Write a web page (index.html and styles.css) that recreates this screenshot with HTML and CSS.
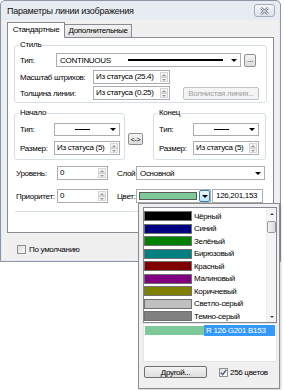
FILE: index.html
```html
<!DOCTYPE html>
<html lang="ru">
<head>
  <meta charset="UTF-8">
  <title>Параметры линии изображения</title>
  <link rel="stylesheet" href="styles.css">
</head>
<body>
  <div class="window">
    <div class="titlebar">
      <span class="title">Параметры линии изображения</span>
      <span class="close-btn">
        <svg width="9" height="8" viewBox="0 0 9 8">
          <path d="M1 1 L8 7 M8 1 L1 7" stroke="#7d8793" stroke-width="2.6"/>
          <path d="M1 1 L8 7 M8 1 L1 7" stroke="#f6f8fa" stroke-width="0.9"/>
        </svg>
      </span>
    </div>

    <div class="client">
      <div class="tabs">
        <div class="tab tab-active">Стандартные</div>
        <div class="tab tab-extra">Дополнительные</div>
      </div>

      <div class="tab-page">
        <!-- Стиль -->
        <fieldset class="group group-style">
          <legend>Стиль</legend>
          <div class="row">
            <span class="lbl w36">Тип:</span>
            <div class="combo combo-type">
              <span>CONTINUOUS</span>
              <span class="line-sample"></span>
              <span class="arrow"></span>
            </div>
            <span class="btn btn-dots">...</span>
          </div>
          <div class="row row-gap3">
            <span class="lbl w73">Масштаб штрихов:</span>
            <div class="spin spin-wide">
              <span class="val">Из статуса (25.4)</span>
              <span class="updown"><i class="up"></i><i class="down"></i></span>
            </div>
          </div>
          <div class="row row-gap2">
            <span class="lbl w73">Толщина линии:</span>
            <div class="spin spin-wide">
              <span class="val">Из статуса (0.25)</span>
              <span class="updown"><i class="up"></i><i class="down"></i></span>
            </div>
            <span class="btn btn-wave">Волнистая линия...</span>
          </div>
        </fieldset>

        <!-- Начало / Конец -->
        <div class="ends">
          <fieldset class="group group-end">
            <legend>Начало</legend>
            <div class="row">
              <span class="lbl w34">Тип:</span>
              <div class="combo combo-small">
                <span class="dash"></span>
                <span class="arrow"></span>
              </div>
            </div>
            <div class="row row-gap5">
              <span class="lbl w34">Размер:</span>
              <div class="spin spin-small">
                <span class="val">Из статуса (5)</span>
                <span class="updown"><i class="up"></i><i class="down"></i></span>
              </div>
            </div>
          </fieldset>

          <span class="btn btn-swap">&lt;-&gt;</span>

          <fieldset class="group group-end group-last">
            <legend>Конец</legend>
            <div class="row">
              <span class="lbl w34">Тип:</span>
              <div class="combo combo-small">
                <span class="dash"></span>
                <span class="arrow"></span>
              </div>
            </div>
            <div class="row row-gap5">
              <span class="lbl w34">Размер:</span>
              <div class="spin spin-small">
                <span class="val">Из статуса (5)</span>
                <span class="updown"><i class="up"></i><i class="down"></i></span>
              </div>
            </div>
          </fieldset>
        </div>

        <!-- Уровень / Слой / Приоритет / Цвет -->
        <div class="fields">
          <div class="row">
            <span class="lbl w41">Уровень:</span>
            <div class="spin spin-num">
              <span class="val">0</span>
              <span class="updown"><i class="up"></i><i class="down"></i></span>
            </div>
            <span class="lbl lbl-right">Слой:</span>
            <div class="combo combo-layer">
              <span class="grow">Основной</span>
              <span class="arrow"></span>
            </div>
          </div>
          <div class="row row-gap9">
            <span class="lbl w41">Приоритет:</span>
            <div class="spin spin-num">
              <span class="val">0</span>
              <span class="updown"><i class="up"></i><i class="down"></i></span>
            </div>
            <span class="lbl lbl-right">Цвет:</span>
            <div class="combo combo-color">
              <span class="swatch-cur"></span>
              <span class="drop-btn"><span class="arrow"></span></span>
            </div>
            <div class="textbox">126,201,153</div>
          </div>
          <div class="separator"></div>
        </div>
      </div>

      <div class="default-row">
        <span class="checkbox"></span>
        <span>По умолчанию</span>
      </div>
    </div>
  </div>

  <!-- выпадающая палитра -->
  <div class="popup">
    <div class="list">
      <div class="items">
        <div class="item"><span class="sw" style="background:#000000"></span>Чёрный</div>
        <div class="item"><span class="sw" style="background:#000080"></span>Синий</div>
        <div class="item"><span class="sw" style="background:#008000"></span>Зелёный</div>
        <div class="item"><span class="sw" style="background:#008080"></span>Бирюзовый</div>
        <div class="item"><span class="sw" style="background:#800000"></span>Красный</div>
        <div class="item"><span class="sw" style="background:#800080"></span>Малиновый</div>
        <div class="item"><span class="sw" style="background:#808000"></span>Коричневый</div>
        <div class="item"><span class="sw" style="background:#c0c0c0"></span>Светло-серый</div>
        <div class="item"><span class="sw" style="background:#808080"></span>Темно-серый</div>
      </div>
      <div class="scrollbar">
        <span class="sb-btn"><i class="sb-up"></i></span>
        <span class="sb-track"><span class="sb-thumb"></span></span>
        <span class="sb-btn"><i class="sb-down"></i></span>
      </div>
    </div>

    <div class="picked">
      <div class="picked-row">
        <span class="picked-sw"></span>
        <span class="picked-text">R 126 G201 B153</span>
      </div>
    </div>

    <div class="popup-bottom">
      <span class="btn btn-other">Другой...</span>
      <span class="checkbox checked">
        <svg width="7" height="7" viewBox="0 0 7 7"><path d="M0.8 3.6 L2.7 5.6 L6.3 0.9" fill="none" stroke="#3b4f86" stroke-width="1.3"/></svg>
      </span>
      <span class="lbl">256 цветов</span>
    </div>
  </div>
</body>
</html>
```

FILE: styles.css
```css
* {
  box-sizing: border-box;
}
body {
  margin: 0;
  width: 284px;
  height: 390px;
  overflow: hidden;
  position: relative;
  background: #fff;
  font-family: "Liberation Sans", Arial, sans-serif;
  font-size: 8px;
  letter-spacing: -0.3px;
  color: #000;
}

/* окно */
.window {
  width: 281px;
  height: 262px;
  border: 1px solid #8a96a3;
  border-radius: 5px 5px 0 0;
  background: #e7ecf2;
  display: flex;
  flex-direction: column;
}
.titlebar {
  height: 19px;
  display: flex;
  align-items: center;
  justify-content: space-between;
  padding: 0 5px 0 6px;
}
.title {
  font-size: 9px;
  letter-spacing: -0.25px;
  color: #111;
}
.close-btn {
  width: 21px;
  height: 13px;
  border: 1px solid #a3acb7;
  border-radius: 3px;
  background: linear-gradient(#f5f7fa, #dce2e9);
  display: flex;
  align-items: center;
  justify-content: center;
}
.client {
  flex: 1;
  margin: 0 1px 1px;
  padding: 2px 5px 0;
  background: #f0f0f0;
}

/* вкладки */
.tabs {
  display: flex;
  align-items: flex-end;
  height: 15px;
}
.tab {
  height: 13px;
  line-height: 12px;
  text-align: center;
  border: 1px solid #898c95;
  border-bottom: none;
  background: linear-gradient(#f3f3f3, #e2e2e2);
}
.tab-active {
  width: 58px;
  height: 16px;
  line-height: 14px;
  margin-bottom: -1px;
  background: #fff;
  position: relative;
  z-index: 1;
}
.tab-extra {
  width: 68px;
  margin-left: -1px;
}
.tab-page {
  height: 196px;
  border: 1px solid #898c95;
  background: #fff;
  padding: 2px 6px 0;
}

/* группы */
.group {
  margin: 0;
  border: 1px solid #d5dfe5;
  border-radius: 3px;
  padding: 3px 4px 2px 5px;
  min-width: 0;
}
.group legend {
  padding: 0 1px;
  margin-left: -1px;
  line-height: 10px;
}
.group-style {
  width: 253px;
}
.row {
  display: flex;
  align-items: center;
}
.row-gap2 { margin-top: 2px; }
.row-gap3 { margin-top: 3px; }
.row-gap5 { margin-top: 5px; }
.row-gap9 { margin-top: 9px; }
.lbl {
  white-space: nowrap;
  flex: none;
}
.w34 { width: 34px; }
.w36 { width: 36px; }
.w41 { width: 41px; }
.w73 { width: 73px; }
.lbl-right {
  width: 19px;
  margin-left: 9px;
}
.grow {
  flex: 1;
}

/* поля */
.combo {
  height: 14px;
  border: 1px solid #abadb3;
  background: #fff;
  display: flex;
  align-items: center;
  padding: 0 3px;
  flex: none;
}
.arrow {
  width: 0;
  height: 0;
  border-left: 3px solid transparent;
  border-right: 3px solid transparent;
  border-top: 3px solid #000;
  flex: none;
}
.combo-type {
  width: 185px;
}
.line-sample {
  flex: 1;
  height: 2px;
  background: #000;
  margin: 0 8px 0 17px;
}
.combo-small {
  width: 66px;
  height: 13px;
}
.dash {
  flex: 1;
  height: 1px;
  background: #000;
  margin: 0 20px 0 17px;
}
.combo-layer {
  width: 129px;
}
.combo-color {
  width: 75px;
  padding: 0 0 0 2px;
  align-items: stretch;
}
.swatch-cur {
  flex: 1;
  margin: 2px 2px 2px 0;
  border: 1px solid #5a5a5a;
  background: #7ec999;
}
.drop-btn {
  width: 11px;
  border: 1px solid #3c7fb1;
  border-radius: 2px;
  background: linear-gradient(#eaf6fd, #bee6fd);
  display: flex;
  align-items: center;
  justify-content: center;
}
.textbox {
  width: 51px;
  height: 14px;
  margin-left: 1px;
  border: 1px solid #abadb3;
  background: #fff;
  padding-left: 3px;
  line-height: 12px;
}
.spin {
  height: 14px;
  border: 1px solid #abadb3;
  background: #fff;
  display: flex;
  flex: none;
}
.spin .val {
  flex: 1;
  padding-left: 2px;
  line-height: 12px;
  white-space: nowrap;
  overflow: hidden;
}
.spin-wide { width: 77px; }
.spin-small { width: 66px; }
.spin-num { width: 51px; }
.updown {
  width: 9px;
  display: flex;
  flex-direction: column;
  padding: 1px 1px 1px 0;
}
.updown i {
  flex: 1;
  border: 1px solid #d4d4d4;
  background: #f4f4f4;
  display: flex;
  align-items: center;
  justify-content: center;
}
.updown i::after {
  content: "";
  border-left: 2px solid transparent;
  border-right: 2px solid transparent;
}
.updown .up::after {
  border-bottom: 2px solid #9a9a9a;
}
.updown .down::after {
  border-top: 2px solid #9a9a9a;
}

/* кнопки */
.btn {
  flex: none;
  display: flex;
  align-items: center;
  justify-content: center;
  border: 1px solid #8e8f8f;
  border-radius: 2px;
  background: linear-gradient(#f3f3f3, #dddddd);
  white-space: nowrap;
}
.btn-dots {
  width: 12px;
  height: 13px;
  margin-left: 3px;
  line-height: 8px;
  align-items: flex-end;
  padding-bottom: 2px;
}
.btn-wave {
  width: 76px;
  height: 13px;
  margin-left: 13px;
  border-color: #bfc2c4;
  background: #f4f4f4;
  color: #a0a0a0;
}
.btn-swap {
  width: 15px;
  height: 12px;
  margin: 25px 0 0 3px;
  font-size: 7px;
}

/* начало / конец */
.ends {
  display: flex;
  align-items: flex-start;
  margin-top: 5px;
}
.group-end {
  width: 111px;
  padding-top: 5px;
  padding-bottom: 4px;
}
.group-last {
  width: 113px;
  margin-left: 10px;
}

.fields {
  margin-top: 6px;
  padding-left: 2px;
}
.separator {
  width: 251px;
  height: 1px;
  margin: 8px 0 0 -1px;
  background: #d5dfe5;
}

/* чекбоксы */
.default-row {
  display: flex;
  align-items: center;
  margin: 12px 0 0 10px;
  gap: 3px;
}
.checkbox {
  width: 9px;
  height: 9px;
  flex: none;
  border: 1px solid #8e8f8f;
  background: linear-gradient(135deg, #dcdcdc, #fbfbfb);
  display: flex;
  align-items: center;
  justify-content: center;
}

/* палитра */
.popup {
  position: absolute;
  left: 138px;
  top: 203px;
  width: 142px;
  height: 186px;
  border: 1px solid #8c8c8c;
  background: #f0f0f0;
  padding: 3px 2px 0 4px;
  box-shadow: 1px 1px 2px rgba(0, 0, 0, 0.2);
}
.list {
  width: 134px;
  height: 116px;
  border: 1px solid #828790;
  background: #fff;
  display: flex;
}
.items {
  flex: 1;
  padding-top: 2px;
}
.item {
  height: 12.5px;
  display: flex;
  align-items: center;
  white-space: nowrap;
}
.sw {
  width: 48px;
  height: 10px;
  margin-right: 2px;
  border: 1px solid #707070;
  flex: none;
}
.scrollbar {
  width: 10px;
  display: flex;
  flex-direction: column;
  background: #f4f4f4;
  border-left: 1px solid #ededed;
}
.sb-btn {
  height: 11px;
  display: flex;
  align-items: center;
  justify-content: center;
}
.sb-up {
  border-left: 2px solid transparent;
  border-right: 2px solid transparent;
  border-bottom: 2px solid #404040;
}
.sb-down {
  border-left: 2px solid transparent;
  border-right: 2px solid transparent;
  border-top: 2px solid #404040;
}
.sb-track {
  flex: 1;
}
.sb-thumb {
  display: block;
  height: 12px;
  margin-top: 2px;
  border: 1px solid #9a9a9a;
  border-radius: 2px;
  background: linear-gradient(90deg, #f4f4f4, #dadada);
}
.picked {
  width: 134px;
  height: 39px;
  border: 1px solid #e3e3e3;
  background: #fff;
  padding: 1px 1px 0 1px;
}
.picked-row {
  display: flex;
  align-items: center;
  height: 11px;
}
.picked-sw {
  width: 59px;
  height: 9px;
  background: #7ec999;
}
.picked-text {
  flex: 1;
  height: 11px;
  line-height: 11px;
  padding-left: 2px;
  background: #3399ff;
  color: #fff;
}
.popup-bottom {
  display: flex;
  align-items: center;
  margin-top: 4px;
  gap: 2px;
}
.btn-other {
  width: 63px;
  height: 12px;
  margin: 0 10px 0 1px;
  border-color: #707070;
}
```
